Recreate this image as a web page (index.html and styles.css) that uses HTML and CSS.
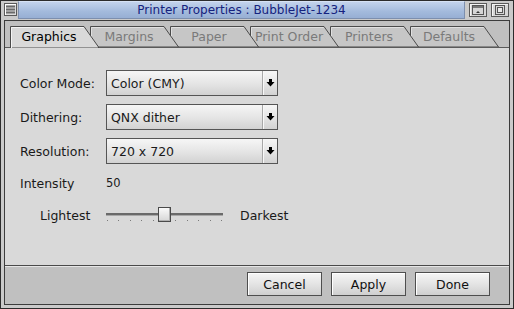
FILE: index.html
```html
<!DOCTYPE html>
<html lang="en">
<head>
    <meta charset="UTF-8">
    <title>Printer Properties</title>
    <link rel="stylesheet" href="styles.css">
</head>
<body>
    <div class="window">
        <div class="titlebar">
            <div class="menu-btn">
                <svg width="11" height="11" viewBox="0 0 11 11">
                    <rect x="1" y="1.5" width="9" height="2" fill="#6a6a6a"/>
                    <rect x="1" y="4.5" width="9" height="2" fill="#6a6a6a"/>
                    <rect x="1" y="7.5" width="9" height="2" fill="#6a6a6a"/>
                </svg>
            </div>
            <div class="title">Printer Properties : BubbleJet-1234</div>
            <div class="win-btn">
                <svg width="16" height="12" viewBox="0 0 16 12">
                    <rect x="2.5" y="1.5" width="11" height="9" fill="none" stroke="#555"/>
                    <rect x="3" y="2" width="10" height="2" fill="#777"/>
                    <polygon points="6,9 10,9 8,7" fill="#333"/>
                </svg>
            </div>
            <div class="win-btn">
                <svg width="16" height="12" viewBox="0 0 16 12">
                    <rect x="3.5" y="1.5" width="9" height="9" fill="none" stroke="#555"/>
                    <rect x="5.5" y="3.5" width="5" height="5" fill="#e8e8e8" stroke="#555"/>
                </svg>
            </div>
        </div>

        <div class="frame">
            <div class="tabs">
                <div class="tab active">
                    <svg class="tab-shape" width="89" height="22" viewBox="0 0 89 22">
                        <polygon points="0.5,22 0.5,0.5 74,0.5 88.5,21 88.5,22" fill="#d9d9d9" stroke="#4a4a4a"/>
                        <polyline points="1.5,22 1.5,1.5 73.5,1.5" fill="none" stroke="#f4f4f4"/>
                    </svg>
                    <span class="tab-label">Graphics</span>
                </div>
                <div class="tab">
                    <svg class="tab-shape" width="89" height="21" viewBox="0 0 89 21">
                        <polygon points="0.5,21 0.5,0.5 74,0.5 88.5,21" fill="#c6c6c6" stroke="#4a4a4a"/>
                        <polyline points="1.5,21 1.5,1.5 73.5,1.5" fill="none" stroke="#e0e0e0"/>
                    </svg>
                    <span class="tab-label">Margins</span>
                </div>
                <div class="tab">
                    <svg class="tab-shape" width="89" height="21" viewBox="0 0 89 21">
                        <polygon points="0.5,21 0.5,0.5 74,0.5 88.5,21" fill="#c6c6c6" stroke="#4a4a4a"/>
                        <polyline points="1.5,21 1.5,1.5 73.5,1.5" fill="none" stroke="#e0e0e0"/>
                    </svg>
                    <span class="tab-label">Paper</span>
                </div>
                <div class="tab">
                    <svg class="tab-shape" width="89" height="21" viewBox="0 0 89 21">
                        <polygon points="0.5,21 0.5,0.5 74,0.5 88.5,21" fill="#c6c6c6" stroke="#4a4a4a"/>
                        <polyline points="1.5,21 1.5,1.5 73.5,1.5" fill="none" stroke="#e0e0e0"/>
                    </svg>
                    <span class="tab-label">Print Order</span>
                </div>
                <div class="tab">
                    <svg class="tab-shape" width="89" height="21" viewBox="0 0 89 21">
                        <polygon points="0.5,21 0.5,0.5 74,0.5 88.5,21" fill="#c6c6c6" stroke="#4a4a4a"/>
                        <polyline points="1.5,21 1.5,1.5 73.5,1.5" fill="none" stroke="#e0e0e0"/>
                    </svg>
                    <span class="tab-label">Printers</span>
                </div>
                <div class="tab">
                    <svg class="tab-shape" width="89" height="21" viewBox="0 0 89 21">
                        <polygon points="0.5,21 0.5,0.5 74,0.5 88.5,21" fill="#c6c6c6" stroke="#4a4a4a"/>
                        <polyline points="1.5,21 1.5,1.5 73.5,1.5" fill="none" stroke="#e0e0e0"/>
                    </svg>
                    <span class="tab-label">Defaults</span>
                </div>
            </div>

            <div class="panel">
                <div class="form-row">
                    <span class="label">Color Mode:</span>
                    <div class="select">
                        <span class="select-text">Color (CMY)</span>
                        <span class="select-arrow"><svg width="9" height="8" viewBox="0 0 9 8"><rect x="3" y="0" width="3" height="3" fill="#000"/><polygon points="0.5,3 8.5,3 4.5,7.5" fill="#000"/></svg></span>
                    </div>
                </div>
                <div class="form-row">
                    <span class="label">Dithering:</span>
                    <div class="select">
                        <span class="select-text">QNX dither</span>
                        <span class="select-arrow"><svg width="9" height="8" viewBox="0 0 9 8"><rect x="3" y="0" width="3" height="3" fill="#000"/><polygon points="0.5,3 8.5,3 4.5,7.5" fill="#000"/></svg></span>
                    </div>
                </div>
                <div class="form-row">
                    <span class="label">Resolution:</span>
                    <div class="select">
                        <span class="select-text">720 x 720</span>
                        <span class="select-arrow"><svg width="9" height="8" viewBox="0 0 9 8"><rect x="3" y="0" width="3" height="3" fill="#000"/><polygon points="0.5,3 8.5,3 4.5,7.5" fill="#000"/></svg></span>
                    </div>
                </div>

                <div class="intensity-row">
                    <span class="label">Intensity</span>
                    <span class="value">50</span>
                </div>

                <div class="slider-row">
                    <span class="slider-end">Lightest</span>
                    <div class="slider">
                        <div class="slider-track"></div>
                        <div class="slider-ticks">
                            <i></i><i></i><i></i><i></i><i></i><i></i><i></i><i></i><i></i><i></i><i></i>
                        </div>
                        <div class="slider-thumb" style="left: 52px;"></div>
                    </div>
                    <span class="slider-end darkest">Darkest</span>
                </div>
            </div>

            <div class="button-bar">
                <button class="btn">Cancel</button>
                <button class="btn">Apply</button>
                <button class="btn">Done</button>
            </div>
        </div>
    </div>
</body>
</html>
```

FILE: styles.css
```css
body {
    margin: 0;
    font-family: "DejaVu Sans", Verdana, sans-serif;
    font-size: 12px;
    color: #1a1a1a;
}

.window {
    width: 514px;
    height: 309px;
    box-sizing: border-box;
    border: 1px solid #2c2c2c;
    background: #cacaca;
    display: flex;
    flex-direction: column;
}

/* title bar */
.titlebar {
    height: 19px;
    display: flex;
    align-items: flex-start;
    padding-left: 3px;
    padding-right: 4px;
}
.menu-btn {
    width: 11px;
    height: 11px;
    margin-top: 2px;
    border: 1px solid #5a5a5a;
    background: #dcdcdc;
    box-shadow: inset 1px 1px 0 #fff;
}
.menu-btn svg { display: block; }
.title {
    flex: 1;
    height: 16px;
    margin-left: 1px;
    border: 1px solid #7d8fae;
    border-top-color: #d6e2f4;
    background: linear-gradient(#c3d3ec, #a3badc 60%, #97afd4);
    color: #15227e;
    font-size: 12px;
    line-height: 16px;
    text-align: center;
}
.win-btn {
    width: 16px;
    height: 12px;
    margin-top: 2px;
    margin-left: 4px;
    border: 1px solid #5a5a5a;
    background: #d6d6d6;
    box-shadow: inset 1px 1px 0 #f4f4f4;
}
.win-btn svg { display: block; }

/* frame */
.frame {
    flex: 1;
    margin: 0 3px 3px 3px;
    border: 1px solid #3c3c3c;
    display: flex;
    flex-direction: column;
    background: #c0c0c0;
}

/* tabs */
.tabs {
    height: 26px;
    display: flex;
    align-items: flex-end;
    padding-left: 5px;
    position: relative;
    z-index: 2;
}
.tab {
    position: relative;
    width: 89px;
    height: 21px;
    margin-right: -9px;
    color: #7a7a7a;
}
.tab.active {
    height: 22px;
    margin-bottom: -1px;
    color: #000;
}
.tab:nth-child(1) { z-index: 10; }
.tab:nth-child(2) { z-index: 9; }
.tab:nth-child(3) { z-index: 8; }
.tab:nth-child(4) { z-index: 7; }
.tab:nth-child(5) { z-index: 6; }
.tab:nth-child(6) { z-index: 5; }
.tab-shape {
    position: absolute;
    left: 0;
    top: 0;
}
.tab-label {
    position: relative;
    display: block;
    width: 78px;
    line-height: 21px;
    text-align: center;
    font-size: 12.5px;
}

/* panel */
.panel {
    height: 219px;
    background: #d9d9d9;
    border-top: 1px solid #5a5a5a;
    border-bottom: 1px solid #4a4a4a;
    padding: 22px 0 0 15px;
    box-sizing: border-box;
}
.form-row {
    display: flex;
    align-items: center;
    height: 26px;
    margin-bottom: 8px;
}
.label {
    width: 86px;
    font-size: 12.5px;
}
.select {
    width: 172px;
    height: 26px;
    box-sizing: border-box;
    border: 1px solid #555;
    background: linear-gradient(#f6f6f6, #e4e4e4 55%, #d2d2d2);
    display: flex;
    align-items: center;
}
.select-text {
    flex: 1;
    padding-left: 4px;
    font-size: 12.5px;
}
.select-arrow {
    width: 14px;
    height: 24px;
    border-left: 1px solid #a8a8a8;
    box-shadow: inset 1px 0 0 #f8f8f8;
    display: flex;
    align-items: center;
    justify-content: center;
}
.select-arrow svg { display: block; }

.intensity-row {
    display: flex;
    align-items: center;
    height: 16px;
    margin-top: 11px;
}
.value {
    font-size: 11.5px;
}

.slider-row {
    display: flex;
    align-items: center;
    height: 18px;
    margin-top: 15px;
    padding-left: 20px;
}
.slider-end {
    width: 66px;
    font-size: 12.5px;
}
.slider-end.darkest {
    width: auto;
    margin-left: 17px;
}
.slider {
    position: relative;
    width: 117px;
    height: 18px;
}
.slider-track {
    margin-top: 7px;
    height: 2px;
    background: #6a6a6a;
    border-bottom: 1px solid #a8a8a8;
}
.slider-ticks {
    display: flex;
    justify-content: space-between;
    margin-top: 4px;
    padding: 0 1px;
}
.slider-ticks i {
    width: 1px;
    height: 1px;
    background: #7a7a7a;
}
.slider-thumb {
    position: absolute;
    top: 1px;
    width: 11px;
    height: 13px;
    border: 1px solid #4a4a4a;
    background: linear-gradient(#fafafa, #d6d6d6);
    box-shadow: inset -1px -1px 0 #b0b0b0;
}

/* buttons */
.button-bar {
    flex: 1;
    display: flex;
    justify-content: flex-end;
    align-items: flex-start;
    gap: 9px;
    padding: 5px 19px 0 0;
    border-top: 1px solid #e6e6e6;
}
.btn {
    width: 75px;
    height: 24px;
    border: 1px solid #4e4e4e;
    background: linear-gradient(#f6f6f6, #e2e2e2 55%, #cfcfcf);
    box-shadow: inset 1px 1px 0 #fff;
    font-family: "DejaVu Sans", Verdana, sans-serif;
    font-size: 12.5px;
    color: #111;
    padding: 0;
}
```
